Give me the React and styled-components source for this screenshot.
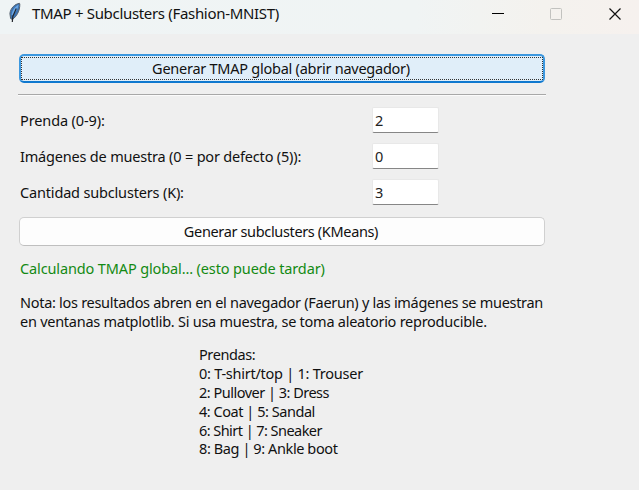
import React from "react";
import styled, { createGlobalStyle } from "styled-components";

const GlobalStyle = createGlobalStyle`
  * { box-sizing: border-box; }
  body { margin: 0; background: #efefef; }
`;

const Window = styled.div`
  width: 639px;
  height: 490px;
  overflow: hidden;
  display: flex;
  flex-direction: column;
  background: #efefef;
  color: #111;
  font-family: "Noto Sans", "Open Sans", sans-serif;
  font-size: 14.5px;
`;

const TitleBar = styled.header`
  height: 34px;
  flex: none;
  display: flex;
  align-items: flex-start;
  padding-left: 8px;
  background: linear-gradient(90deg, #eff4f5 0%, #f0f4f4 65%, #f4f2ee 85%, #f6f1ee 100%);
`;

const TitleIcon = styled.svg`
  width: 14px;
  height: 21px;
  margin: 2px 10px 0 0;
`;

const Title = styled.h1`
  margin: 0;
  flex: 1;
  font-size: 15px;
  font-weight: 400;
  line-height: 26px;
`;

const Controls = styled.svg`
  width: 160px;
  height: 28px;
  flex: none;
`;

const Text = styled.span`
  white-space: pre;
  letter-spacing: ${(p) => p.$track || 0}px;
`;

const Panel = styled.main`
  width: 528px;
  margin: 20px 0 0 18px;
  display: flex;
  flex-direction: column;
`;

const Button = styled.button`
  height: 29px;
  margin: 0 1px;
  padding: ${(p) => (p.$focused ? "1px 0" : "0")};
  border: ${(p) => (p.$focused ? "2px solid #3d98df" : "1px solid #d0d0d0")};
  border-bottom-color: ${(p) => (p.$focused ? "#0f78cf" : "#bfbfbf")};
  border-radius: 5px;
  background: ${(p) => (p.$focused ? "#e0eef9" : "#fdfdfd")};
  color: inherit;
  font: inherit;
  display: flex;
`;

const ButtonFace = styled.span`
  flex: 1;
  height: 100%;
  display: flex;
  align-items: center;
  justify-content: center;
  padding: 0 2px 2px 0;
  line-height: 20px;
  border: 1px ${(p) => (p.$focused ? "dotted #333" : "solid transparent")};
`;

const Separator = styled.hr`
  width: 100%;
  height: 2px;
  margin: 11px 0 11px;
  border: 0;
  border-top: 1px solid #a8a8a8;
  background: #fbfbfb;
`;

const Form = styled.div`
  display: grid;
  grid-template-columns: 353px 66px;
  row-gap: 10px;
  padding-left: 2px;
  margin-bottom: 12px;
`;

const Label = styled.label`
  line-height: 26px;
`;

const Input = styled.input`
  width: 67px;
  height: 26px;
  margin-left: -1px;
  padding: 0 2px;
  border: 1px solid #e8e8e8;
  border-bottom: 1px solid #868686;
  border-radius: 2px;
  outline: 0;
  background: #fff;
  color: #222;
  font: inherit;
`;

const Status = styled.p`
  margin: 12px 0 0 2px;
  line-height: 20px;
  color: #138a13;
`;

const Note = styled.p`
  margin: 15px 0 0 2px;
  line-height: 19px;
  display: flex;
  flex-direction: column;
`;

const Legend = styled.div`
  margin: 14.4px 0 0 181px;
  line-height: 18.8px;
  display: flex;
  flex-direction: column;
`;

const fields = [
  ["Prenda (0-9):", "2", -0.12],
  ["Imágenes de muestra (0 = por defecto (5)):", "0", -0.19],
  ["Cantidad subclusters (K):", "3", -0.17],
];

const garments = [
  ["Prendas:", -0.4],
  ["0: T-shirt/top | 1: Trouser", -0.25],
  ["2: Pullover | 3: Dress", -0.5],
  ["4: Coat | 5: Sandal", -0.46],
  ["6: Shirt | 7: Sneaker", -0.55],
  ["8: Bag | 9: Ankle boot", -0.4],
];

export default function App() {
  return (
    <Window>
      <GlobalStyle />
      <TitleBar>
        <TitleIcon viewBox="0 0 14 21">
          <path d="M11.500 1.300C7 2 2.500 6 1.900 11.500L2.600 16.500l1.800 1C8.500 14.500 12 9 11.800 2Z" fill="#3c74b4" stroke="#56616d" strokeWidth="1" />
          <path d="M10.600 2.800C7 4.500 4 8.500 3.600 13L5 13C8 9.500 10 6.500 10.600 2.800Z" fill="#6ca6e2" />
          <path d="M8.300 6.500 4.800 14.500 4.300 20" fill="none" stroke="#22262c" strokeWidth="1.200" />
        </TitleIcon>
        <Title><Text $track={-0.32}>TMAP + Subclusters (Fashion-MNIST)</Text></Title>
        <Controls viewBox="-20 0 160 28">
          <rect x="-7" y="13" width="12" height="1" fill="#000" />
          <rect x="51.5" y="8.5" width="11" height="11" rx="1" fill="none" stroke="#c2c2bf" />
          <path d="m110.500 8.500 11 11m0-11-11 11" stroke="#111" strokeWidth="1.200" />
        </Controls>
      </TitleBar>
      <Panel>
        <Button $focused><ButtonFace $focused><Text $track={-0.25}>Generar TMAP global (abrir navegador)</Text></ButtonFace></Button>
        <Separator />
        <Form>
          {fields.map(([label, value, track], i) => (
            <React.Fragment key={label}>
              <Label htmlFor={"f" + i}><Text $track={track}>{label}</Text></Label>
              <Input id={"f" + i} defaultValue={value} />
            </React.Fragment>
          ))}
        </Form>
        <Button><ButtonFace><Text $track={-0.35}>Generar subclusters (KMeans)</Text></ButtonFace></Button>
        <Status><Text $track={-0.13}>Calculando TMAP global... (esto puede tardar)</Text></Status>
        <Note>
          <Text $track={-0.29}>Nota: los resultados abren en el navegador (Faerun) y las imágenes se muestran</Text>
          <Text $track={-0.26}>en ventanas matplotlib. Si usa muestra, se toma aleatorio reproducible.</Text>
        </Note>
        <Legend>
          {garments.map(([line, track]) => <Text key={line} $track={track}>{line}</Text>)}
        </Legend>
      </Panel>
    </Window>
  );
}
